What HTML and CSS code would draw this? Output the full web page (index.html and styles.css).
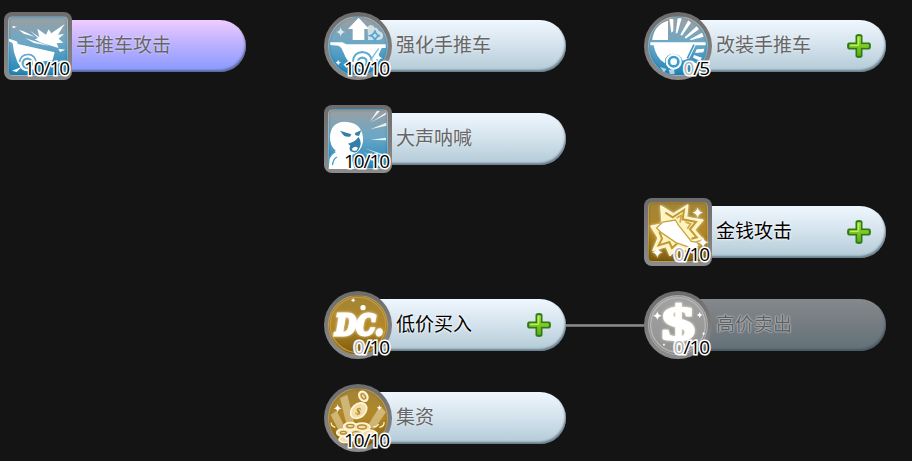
FILE: index.html
```html
<!DOCTYPE html>
<html lang="zh-CN">

<head>
    <meta charset="UTF-8">
    <meta name="viewport" content="width=device-width, initial-scale=1.0">
    <title>技能树</title>
    <link rel="stylesheet" href="styles.css">
</head>

<body>
    <!-- shared shapes: plus button, sparkle -->
    <svg class="defs" width="0" height="0">
        <defs>
            <linearGradient id="green" x1="0" y1="0" x2="0" y2="1">
                <stop offset="0" stop-color="#a5e03a" />
                <stop offset="1" stop-color="#5cb012" />
            </linearGradient>
            <symbol id="plus" viewBox="0 0 72 72">
                <path d="M27 6q0-4 4-4h10q4 0 4 4v21h21q4 0 4 4v10q0 4-4 4H45v21q0 4-4 4H31q-4 0-4-4V45H6q-4 0-4-4V31q0-4 4-4h21z" fill="#2d7a18" stroke="#2d7a18" stroke-width="3" />
                <path d="M32 8h8v24h24v8H40v24h-8V40H8v-8h24z" fill="url(#green)" stroke="url(#green)" stroke-width="3" stroke-linejoin="round" />
                <path d="M34 10v24H10" fill="none" stroke="#cdf765" stroke-width="3" />
            </symbol>
            <symbol id="star" viewBox="-10 -10 20 20">
                <path d="M0-10Q1-1 10 0Q1 1 0 10Q-1 1-10 0Q-1-1 0-10z" />
            </symbol>
        </defs>
    </svg>

    <main class="tree">
        <div class="skill c1 r1 active">
            <div class="icon square blue">
                <svg viewBox="0 0 204 204">
                    <g fill="#fff">
                        <path d="M78 56L106 76 100 50 126 68 134 52 142 64 182 36 162 68 180 66 164 80 178 92 158 94 164 108 112 92 92 82 102 78z" />
                        <path d="M15 80L38 88 42 96 152 121 146 144 106 150 96 172H54L40 150 30 120 26 94 15 88z" />
                        <path d="M24 42l14 2-10 5zM44 53l18 6 32 16-35-10zM63 78l25 8 50 16-48-9zM163 110l21 3-16 7zM24 176l30-12-16 16z" />
                        <circle cx="70" cy="154" r="24" />
                    </g>
                    <circle cx="70" cy="154" r="14" fill="none" stroke="#63a8ca" stroke-width="7" />
                    <path d="M46 150q6-26 32-22 14 4 18 20" fill="none" stroke="#63a8ca" stroke-width="5" />
                    <path d="M146 160l30-14" stroke="#d5eaf5" stroke-width="5" />
                </svg>
            </div>
            <div class="bar"><span class="name">手推车攻击</span></div>
            <span class="count">10/10</span>
        </div>

        <div class="skill c2 r1">
            <div class="icon round blue">
                <svg viewBox="0 0 204 204">
                    <g fill="#fff">
                        <path d="M104 17l31 34h-14v33H86V51H72z" />
                        <path d="M131 54q-5-12 9-15 9 0 12 8 10 0 12 10 15 4 13 16-1 10-12 11h-33z" fill-opacity=".65" />
                        <path d="M19 91h36l12 6h118v11h-12l-18 40-20 10H80L66 138 52 108 44 101 19 99z" />
                        <circle cx="115" cy="147" r="25" />
                        <use href="#star" x="36" y="41" width="28" height="38" fill-opacity=".75" />
                        <use href="#star" x="34" y="142" width="17" height="20" />
                        <use href="#star" x="151" y="121" width="26" height="34" />
                    </g>
                    <path d="M86 150q2-28 29-30 27 2 29 30" fill="none" stroke="#59a9d1" stroke-width="6" />
                    <circle cx="115" cy="150" r="13" fill="none" stroke="#59a9d1" stroke-width="7" />
                    <path d="M153 55q2 14 14 16-12 3-14 16-3-13-14-16 11-3 14-16z" fill="none" stroke="#55a7d0" stroke-width="5" />
                    <path d="M139 145l25-36" fill="none" stroke="#7dbcdb" stroke-width="4" />
                </svg>
            </div>
            <div class="bar"><span class="name">强化手推车</span></div>
            <span class="count">10/10</span>
        </div>

        <div class="skill c3 r1">
            <div class="icon round blue">
                <svg viewBox="0 0 204 204">
                    <g fill="#fff">
                        <path d="M72 26v58H25q4-45 47-58z" />
                        <path d="M19 91h166v9h-30l-19 39-20 7q-9-25-36-20-20 8-17 28-27-14-34-54H19z" />
                        <path d="M76 20l12 2v35l-6 5zM101 19h12l-13 45h-5zM133 25l8 7-27 39-5-3zM158 43l7 9-40 28-3-4zM174 62l5 12-39 11-2-3zM158 112l23-2-3 11-25 2zM150 129l24 8-6 9-21-9zM143 145l20 14-9 7-16-14z" />
                        <path d="M48 165l20 6-8 10zM74 174l16-4 2 16h-14z" fill-opacity=".65" />
                        <circle cx="89" cy="149" r="24" />
                    </g>
                    <circle cx="89" cy="149" r="14" fill="none" stroke="#3c9dce" stroke-width="8" />
                    <path d="M130 139l20-41" stroke="#3d9ac9" stroke-width="5" />
                </svg>
            </div>
            <div class="bar"><span class="name">改装手推车</span><svg class="plus"><use href="#plus" /></svg></div>
            <span class="count"><i>0</i>/5</span>
        </div>

        <div class="skill c2 r2">
            <div class="icon square blue">
                <svg viewBox="0 0 204 204">
                    <g fill="#fff">
                        <path d="M18 94q3-43 45-44 50 2 54 48 2 29-19 45-12 7-19 7l13 42H14l3-36 18-19q-18-14-17-43z" />
                        <path d="M168 18l-31 33 22-34zM185 29l-46 24 48-31zM187 53l-48 20 48-11zM186 98l-47 6 47 2zM122 130l64 21v6zM118 139l59 45-7 5z" fill-opacity=".85" />
                    </g>
                    <path d="M48 77l34 11-4 7q-17 3-24-10zM93 84l19-8-7 17-11-2zM72 116q18-3 32-20 12 19 1 36-7 16-25 7-6-7-1-17z" fill="#337fa9" />
                    <path d="M84 131q9-10 18-2l-5 8H86z" fill="#fff" />
                    <path d="M16 160q6-14 18-19M25 180q4-20 14-24" fill="none" stroke="#4a9cc6" stroke-width="4" />
                </svg>
            </div>
            <div class="bar"><span class="name">大声呐喊</span></div>
            <span class="count">10/10</span>
        </div>

        <div class="skill c3 r3 open">
            <div class="icon square gold">
                <svg viewBox="0 0 204 204">
                    <g class="glow">
                        <path d="M50 23L88 47 132 20 128 58 178 66 152 96 176 122 144 130 134 160 104 146 78 174 66 146 26 158 42 120 20 84 54 78z" fill="#fff3bf" stroke="#fffbe8" stroke-width="3" />
                        <path d="M64 44L86 58 120 36 116 64 156 72 138 94 158 118 142 122M46 100L54 122 44 142 76 132 84 150 100 136" fill="none" stroke="#c09a34" stroke-width="6" />
                        <path d="M98 60l14-8-4 22M124 72l16 6-10 14" fill="none" stroke="#d0a747" stroke-width="5" />
                        <path d="M38 90L56 72 94 66 104 82 142 130 158 132 166 144 156 148 158 158 146 160 136 148 96 134 52 104z" fill="#fff" stroke="#c9a445" stroke-width="4" />
                        <g fill="#fff">
                            <use href="#star" x="145" y="25" width="32" height="38" />
                            <use href="#star" x="23" y="142" width="34" height="42" />
                            <use href="#star" x="160" y="113" width="34" height="40" />
                        </g>
                    </g>
                </svg>
            </div>
            <div class="bar"><span class="name">金钱攻击</span><svg class="plus"><use href="#plus" /></svg></div>
            <span class="count"><i>0</i>/10</span>
        </div>

        <div class="skill c2 r4 open">
            <div class="icon round gold">
                <svg viewBox="0 0 204 204">
                    <circle cx="102" cy="102" r="83" fill="none" stroke="#c29a3b" stroke-width="4" />
                    <text class="coin-text" x="34" y="131" textLength="144" lengthAdjust="spacingAndGlyphs">DC.</text>
                    <circle cx="117" cy="50" r="8" fill="#fff" />
                    <use href="#star" x="80" y="20" width="15" height="15" fill="#fff" />
                </svg>
            </div>
            <div class="bar"><span class="name">低价买入</span><svg class="plus"><use href="#plus" /></svg></div>
            <span class="count"><i>0</i>/10</span>
            <div class="link"></div>
        </div>

        <div class="skill c3 r4 locked">
            <div class="icon round gray">
                <svg viewBox="0 0 204 204">
                    <circle cx="102" cy="102" r="82" fill="none" stroke="#b8b8b8" stroke-width="4" />
                    <text class="dollar" x="53" y="146" textLength="100" lengthAdjust="spacingAndGlyphs">$</text>
                    <g fill="#fff">
                        <use href="#star" x="26" y="58" width="28" height="32" />
                        <use href="#star" x="158" y="62" width="18" height="20" />
                        <use href="#star" x="55" y="155" width="10" height="12" />
                        <use href="#star" x="173" y="121" width="12" height="14" />
                    </g>
                </svg>
            </div>
            <div class="bar"><span class="name">高价卖出</span></div>
            <span class="count"><i>0</i>/10</span>
        </div>

        <div class="skill c2 r5">
            <div class="icon round gold">
                <svg viewBox="0 0 204 204">
                    <path d="M48 42l22-10 22 90-22 10zM168 66l18 18-34 50-24-4zM20 92l18-11 26 50-18 13z" fill="#e2cfa2" fill-opacity=".65" />
                    <g fill="#f3dfab" stroke="#fff6d8" stroke-width="5">
                        <ellipse cx="118" cy="37" rx="12" ry="16" transform="rotate(-35 118 37)" />
                        <ellipse cx="104" cy="80" rx="20" ry="27" transform="rotate(48 104 80)" />
                        <ellipse cx="79" cy="128" rx="20" ry="12" />
                        <ellipse cx="114" cy="130" rx="24" ry="13" />
                        <ellipse cx="58" cy="146" rx="20" ry="11" />
                        <ellipse cx="96" cy="148" rx="22" ry="13" />
                        <ellipse cx="136" cy="150" rx="22" ry="12" />
                        <ellipse cx="66" cy="166" rx="21" ry="10" />
                    </g>
                    <g fill="none" stroke="#b88c32" stroke-width="4">
                        <ellipse cx="118" cy="37" rx="5" ry="9" transform="rotate(-35 118 37)" />
                        <ellipse cx="79" cy="126" rx="11" ry="5" />
                        <ellipse cx="114" cy="129" rx="13" ry="6" />
                        <ellipse cx="96" cy="149" rx="11" ry="6" />
                        <ellipse cx="58" cy="146" rx="9" ry="4" />
                        <path d="M22 116q-2 10 12 14M166 130q16-3 14-16M148 128q10 2 16-8" stroke="#fff1c5" />
                    </g>
                    <text class="coin-mark" x="103" y="92" text-anchor="middle" transform="rotate(18 103 82)">$</text>
                    <g fill="#fff">
                        <use href="#star" x="28" y="56" width="26" height="34" />
                        <use href="#star" x="158" y="62" width="16" height="19" />
                    </g>
                </svg>
            </div>
            <div class="bar"><span class="name">集资</span></div>
            <span class="count">10/10</span>
        </div>
    </main>
</body>

</html>
```
FILE: styles.css
```css
body {
    margin: 0;
    height: 461px;
    overflow: hidden;
    background-color: #141414;
    font-family: "Open Sans", "Noto Sans CJK SC", sans-serif;
}

.defs {
    position: absolute;
}

.tree {
    display: grid;
    grid-template-columns: 320px 320px 242px;
    grid-template-rows: repeat(4, 93px) 68px;
    padding: 12px 0 0 4px;
}

.c1 { grid-column: 1; }
.c2 { grid-column: 2; }
.c3 { grid-column: 3; }
.r1 { grid-row: 1; }
.r2 { grid-row: 2; }
.r3 { grid-row: 3; }
.r4 { grid-row: 4; }
.r5 { grid-row: 5; }

.skill {
    position: relative;
    display: flex;
    align-items: center;
    height: 68px;
}

.icon {
    position: relative;
    z-index: 1;
    flex: none;
    box-sizing: border-box;
    width: 68px;
    height: 68px;
    padding: 4px;
    background: linear-gradient(#6c6c6c, #8c8c8c);
}

.icon::before {
    content: "";
    display: block;
    height: 100%;
    box-sizing: border-box;
    border: 1px solid rgba(255, 255, 255, 0.2);
    border-radius: inherit;
    box-shadow: inset 0 0 3px rgba(0, 0, 0, 0.2);
}

.square {
    border-radius: 8px;
}

.square::before {
    border-radius: 5px;
}

.round {
    border-radius: 50%;
}

.blue::before {
    background: linear-gradient(#9b9fa1, #6ba8c7 45%, #2184b8);
}

.gold::before {
    background: linear-gradient(#a28436, #b28826 50%, #7e5b0c);
}

.gray::before {
    background: linear-gradient(#a3a3a3, #929292);
}

.icon svg {
    position: absolute;
    top: 0;
    left: 0;
    width: 68px;
    height: 68px;
}

.glow,
.coin-text,
.dollar {
    filter: drop-shadow(0 0 4px rgba(255, 247, 210, 0.8));
}

.coin-text {
    font: italic bold 84px "DejaVu Serif", serif;
    fill: #fff;
    stroke: #fff;
    stroke-width: 9px;
}

.dollar {
    font: bold 148px "Liberation Serif", serif;
    fill: #fff;
    stroke: #fff;
    stroke-width: 7px;
}

.coin-mark {
    font: bold 30px "Liberation Serif", serif;
    fill: #b07e1d;
}

.bar {
    display: flex;
    flex: none;
    align-items: center;
    justify-content: space-between;
    box-sizing: border-box;
    width: 208px;
    height: 52px;
    margin-left: -34px;
    padding: 0 15px 0 38px;
    border-radius: 0 26px 26px 0;
    background: linear-gradient(#f0f7fe, #d3e2ec 50%, #b2cad6);
    box-shadow: inset -1px -2px 2px rgba(55, 75, 90, 0.6);
}

.active .bar {
    background: linear-gradient(#efccff, #bdb1ff 45%, #8799ff);
}

.locked .bar {
    background: linear-gradient(#85888c, #757c81 50%, #627078);
}

.name {
    padding-bottom: 4px;
    color: #666;
    font-family: "Noto Sans CJK SC", sans-serif;
    font-size: 19px;
    line-height: 26px;
    text-shadow: 0 0 2px rgba(255, 255, 255, 0.8);
}

.open .name {
    color: #000;
    text-shadow: 0 0 2px #fff, 0 0 3px #fff;
}

.locked .name {
    color: #5c6266;
    text-shadow: 0 0 1px #ccc, 0 0 1px #bbb, 0 0 2px #ccc;
}

.plus {
    width: 24px;
    height: 24px;
}

.count {
    position: absolute;
    z-index: 2;
    left: 0;
    bottom: 2px;
    width: 65px;
    color: #000;
    font-size: 19px;
    line-height: 20px;
    letter-spacing: -1.1px;
    text-align: right;
    -webkit-text-stroke: 3px #fff;
    paint-order: stroke fill;
}

.count i {
    color: #b4b4b4;
    font-style: normal;
}

/* line to the skill this one unlocks */
.link {
    flex: none;
    width: 78px;
    height: 3px;
    background: linear-gradient(#686868, #8a8a8a, #5c5c5c);
}
```
